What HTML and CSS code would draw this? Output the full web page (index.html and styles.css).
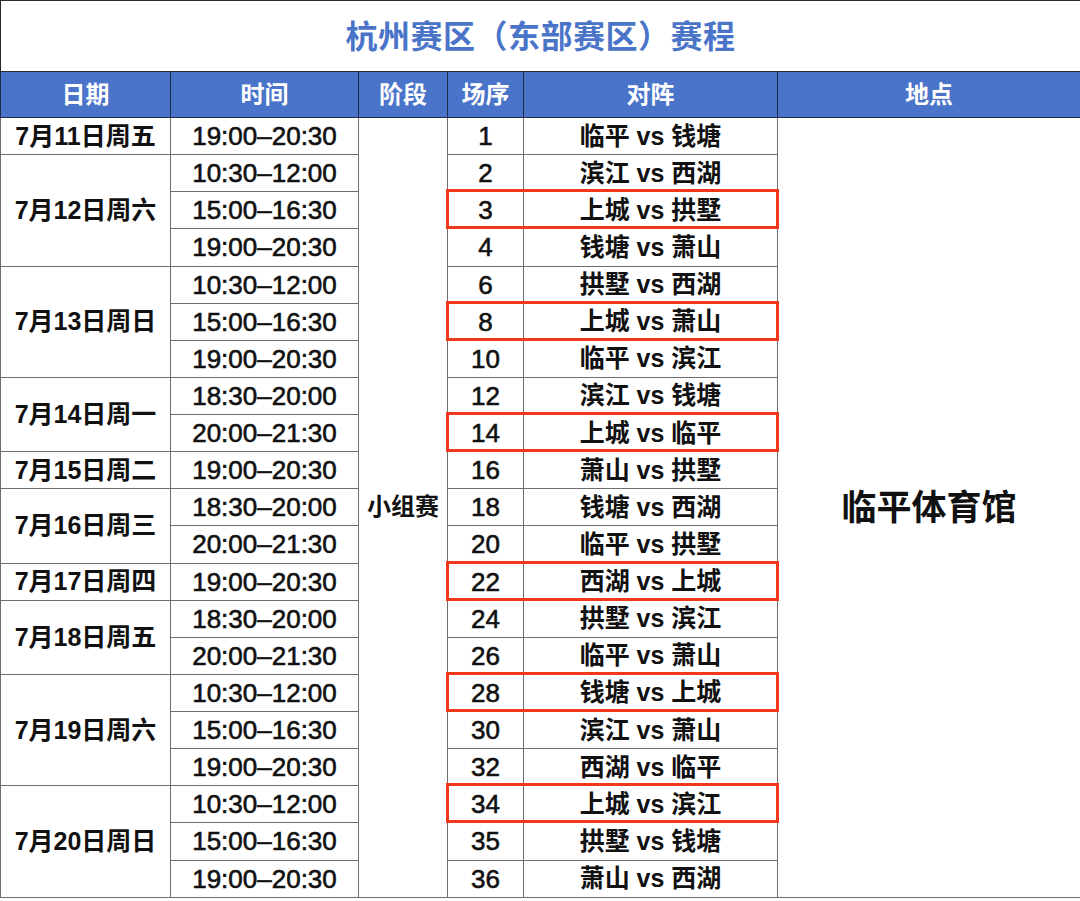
FILE: index.html
```html
<!DOCTYPE html>
<html lang="zh-CN">
<head>
<meta charset="utf-8">
<title>杭州赛区（东部赛区）赛程</title>
<link rel="stylesheet" href="styles.css">
</head>
<body>
<table class="sched">
  <colgroup>
    <col class="c-date"><col class="c-time"><col class="c-stage"><col class="c-no"><col class="c-match"><col class="c-venue">
  </colgroup>
  <tr class="title-row"><td colspan="6" class="title">杭州赛区（东部赛区）赛程</td></tr>
  <tr class="head-row"><th>日期</th><th>时间</th><th>阶段</th><th>场序</th><th>对阵</th><th>地点</th></tr>
  <tr><td>7月11日周五</td><td class="num">19:00–20:30</td><td rowspan="21" class="stage">小组赛</td><td class="num">1</td><td>临平 vs 钱塘</td><td rowspan="21" class="venue">临平体育馆</td></tr>
  <tr><td rowspan="3">7月12日周六</td><td class="num">10:30–12:00</td><td class="num">2</td><td>滨江 vs 西湖</td></tr>
  <tr><td class="num">15:00–16:30</td><td class="num hl"><span class="mark"></span>3</td><td>上城 vs 拱墅</td></tr>
  <tr><td class="num">19:00–20:30</td><td class="num">4</td><td>钱塘 vs 萧山</td></tr>
  <tr><td rowspan="3">7月13日周日</td><td class="num">10:30–12:00</td><td class="num">6</td><td>拱墅 vs 西湖</td></tr>
  <tr><td class="num">15:00–16:30</td><td class="num hl"><span class="mark"></span>8</td><td>上城 vs 萧山</td></tr>
  <tr><td class="num">19:00–20:30</td><td class="num">10</td><td>临平 vs 滨江</td></tr>
  <tr><td rowspan="2">7月14日周一</td><td class="num">18:30–20:00</td><td class="num">12</td><td>滨江 vs 钱塘</td></tr>
  <tr><td class="num">20:00–21:30</td><td class="num hl"><span class="mark"></span>14</td><td>上城 vs 临平</td></tr>
  <tr><td>7月15日周二</td><td class="num">19:00–20:30</td><td class="num">16</td><td>萧山 vs 拱墅</td></tr>
  <tr><td rowspan="2">7月16日周三</td><td class="num">18:30–20:00</td><td class="num">18</td><td>钱塘 vs 西湖</td></tr>
  <tr><td class="num">20:00–21:30</td><td class="num">20</td><td>临平 vs 拱墅</td></tr>
  <tr><td>7月17日周四</td><td class="num">19:00–20:30</td><td class="num hl"><span class="mark"></span>22</td><td>西湖 vs 上城</td></tr>
  <tr><td rowspan="2">7月18日周五</td><td class="num">18:30–20:00</td><td class="num">24</td><td>拱墅 vs 滨江</td></tr>
  <tr><td class="num">20:00–21:30</td><td class="num">26</td><td>临平 vs 萧山</td></tr>
  <tr><td rowspan="3">7月19日周六</td><td class="num">10:30–12:00</td><td class="num hl"><span class="mark"></span>28</td><td>钱塘 vs 上城</td></tr>
  <tr><td class="num">15:00–16:30</td><td class="num">30</td><td>滨江 vs 萧山</td></tr>
  <tr><td class="num">19:00–20:30</td><td class="num">32</td><td>西湖 vs 临平</td></tr>
  <tr><td rowspan="3">7月20日周日</td><td class="num">10:30–12:00</td><td class="num hl"><span class="mark"></span>34</td><td>上城 vs 滨江</td></tr>
  <tr><td class="num">15:00–16:30</td><td class="num">35</td><td>拱墅 vs 钱塘</td></tr>
  <tr><td class="num">19:00–20:30</td><td class="num">36</td><td>萧山 vs 西湖</td></tr>
</table>
</body>
</html>
```

FILE: styles.css
```css
html, body {
  margin: 0;
  padding: 0;
  background: #ffffff;
}

.sched {
  width: 1080px;
  border-collapse: collapse;
  table-layout: fixed;
  font-family: "Liberation Sans", "Noto Sans CJK SC", sans-serif;
  font-weight: 700;
  color: #111111;
}

.c-date { width: 170px; }
.c-time { width: 188px; }
.c-stage { width: 89px; }
.c-no { width: 76px; }
.c-match { width: 254px; }
.c-venue { width: 303px; }

.sched td,
.sched th {
  border: 1.5px solid #6e6e6e;
  padding: 0;
  text-align: center;
  vertical-align: middle;
  font-size: 25px;
  line-height: 1;
  white-space: nowrap;
}

.sched tr {
  height: 37.14px;
}

.sched .title-row {
  height: 71px;
}

.sched .title {
  border: 1.5px solid #2a2a2a;
  color: #4a74c8;
  font-size: 32px;
  letter-spacing: 0.5px;
  padding-top: 2px;
}

.sched .head-row {
  height: 46px;
}

.sched th {
  background: #4a74c9;
  color: #ffffff;
  border-color: #1c2b4a;
  font-size: 24px;
}

.sched .num {
  font-family: "Liberation Sans", sans-serif;
  font-size: 26px;
  font-weight: 400;
  -webkit-text-stroke: 0.6px #111111;
}

.sched .stage {
  font-size: 24px;
}

.sched .venue {
  font-size: 35px;
  border-right-color: #2a2a2a;
}

.hl {
  position: relative;
}

.mark {
  position: absolute;
  left: -2px;
  top: -3px;
  width: 333px;
  height: 40px;
  box-sizing: border-box;
  border: 3.5px solid #f0381d;
  pointer-events: none;
}
```
